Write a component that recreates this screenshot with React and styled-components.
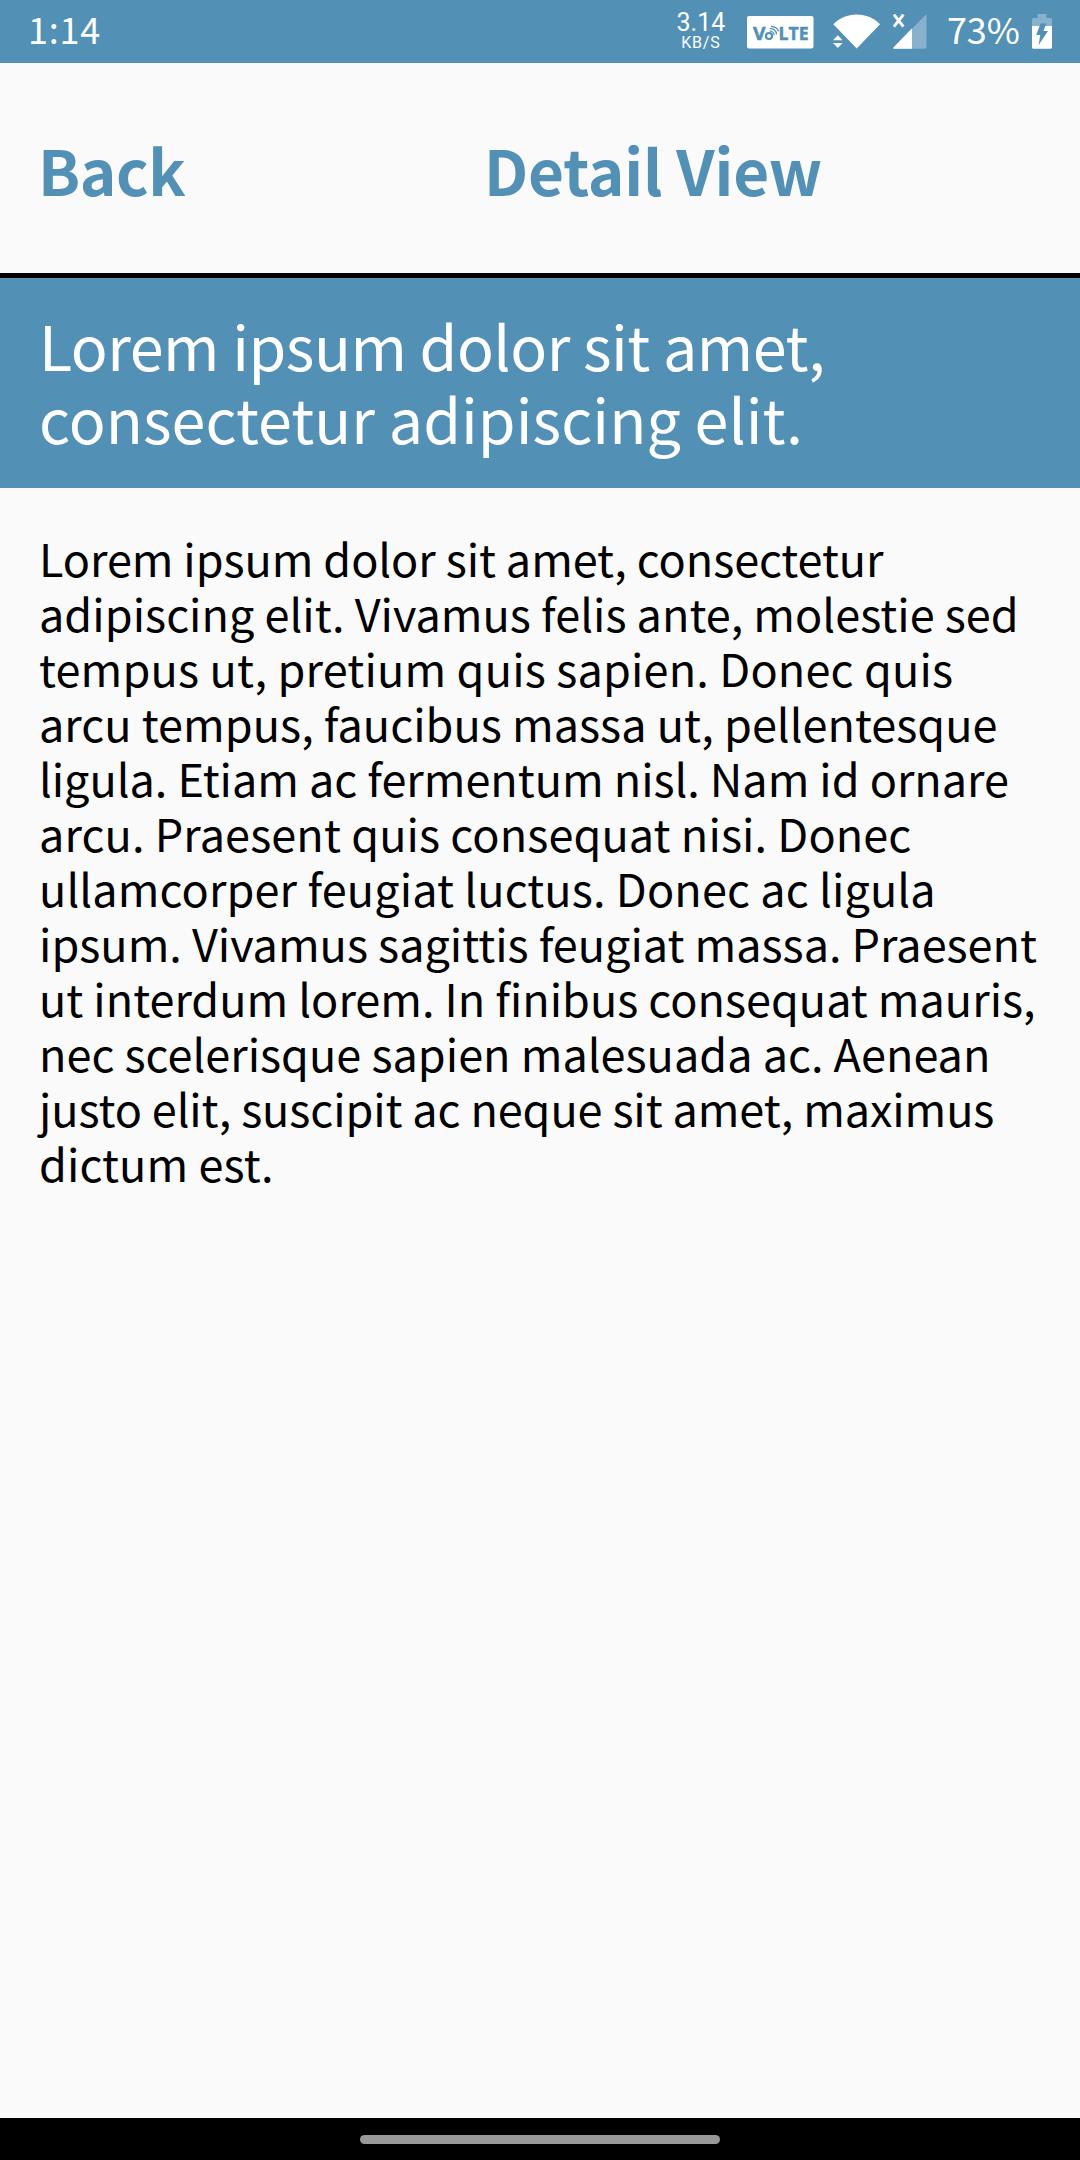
import React from 'react';
import styled, { createGlobalStyle } from 'styled-components';

const BLUE = '#5390b6';
const FONT = '"Noto Sans CJK SC", "Noto Sans", sans-serif';

const GlobalStyle = createGlobalStyle`
  body {
    margin: 0;
    background: #fafafa;
    font-family: ${FONT};
  }
`;

const Screen = styled.div`
  display: flex;
  flex-direction: column;
  width: 1080px;
  height: 2160px;
  overflow: hidden;
  background: #fafafa;
`;

const StatusBar = styled.div`
  display: flex;
  align-items: flex-start;
  height: 63px;
  flex: none;
  box-sizing: border-box;
  padding: 0 28px 0 28px;
  background: ${BLUE};
  color: #fff;
`;

const StatusText = styled.span`
  font-size: 36px;
  line-height: 56px;
  letter-spacing: ${(p) => p.$tracking}px;
  white-space: nowrap;
`;

const Spacer = styled.div`
  flex: 1;
`;

const Speed = styled.div`
  display: flex;
  flex-direction: column;
  align-items: center;
  width: 48px;
  margin: 10px 22px 0 0;
  font-family: Roboto, sans-serif;
  white-space: nowrap;
`;

const SpeedValue = styled.span`
  font-size: 25px;
  line-height: 25px;
`;

const SpeedUnit = styled.span`
  font-size: 16px;
  line-height: 16px;
  letter-spacing: 0.8px;
`;

const Icon = styled.svg`
  display: block;
  flex: none;
  width: ${(p) => p.$w}px;
  height: 36px;
  margin: 14px ${(p) => p.$gap}px 0 0;
`;

const BatteryGroup = styled.div`
  display: flex;
  gap: 12px;
`;

const NavBar = styled.header`
  display: flex;
  align-items: center;
  height: 215px;
  flex: none;
  box-sizing: border-box;
  padding: 2px 38px 0;
  border-bottom: 5px solid #000;
  color: ${BLUE};
`;

const BackButton = styled.button`
  width: 446px;
  padding: 0;
  border: 0;
  background: none;
  color: inherit;
  font: 700 62px/73px ${FONT};
  letter-spacing: -0.4px;
  text-align: left;
`;

const NavTitle = styled.h1`
  margin: 0;
  font: 700 62px/73px ${FONT};
  letter-spacing: -0.15px;
`;

const Banner = styled.section`
  height: 210px;
  flex: none;
  box-sizing: border-box;
  padding: 30px 39px 0;
  background: ${BLUE};
  color: #fff;
`;

const Line = styled.span`
  display: block;
  white-space: pre;
  letter-spacing: ${(p) => p.$tracking}px;
`;

const Heading = styled.h2`
  margin: 0;
  font-weight: 400;
  font-size: 61px;
  line-height: 73px;
`;

const Article = styled.main`
  flex: 1;
  padding: 42px 40px 0 39px;
  color: #000;
`;

const Paragraph = styled.p`
  margin: 0;
  font-size: 45px;
  line-height: 55px;
`;

const GestureBar = styled.footer`
  display: flex;
  justify-content: center;
  height: 42px;
  flex: none;
  box-sizing: border-box;
  padding-top: 17px;
  background: #000;
`;

const Handle = styled.div`
  width: 360px;
  height: 9px;
  border-radius: 5px;
  background: #989898;
`;

const heading = [
  ['Lorem ipsum dolor sit amet,', -0.5],
  ['consectetur adipiscing elit.', 0.05],
];

const body = [
  ['Lorem ipsum dolor sit amet, consectetur', -0.07],
  ['adipiscing elit. Vivamus felis ante, molestie sed', 0.03],
  ['tempus ut, pretium quis sapien. Donec quis', 0.18],
  ['arcu tempus, faucibus massa ut, pellentesque', 0.03],
  ['ligula. Etiam ac fermentum nisl. Nam id ornare', -0.02],
  ['arcu. Praesent quis consequat nisi. Donec', 0.1],
  ['ullamcorper feugiat luctus. Donec ac ligula', 0.13],
  ['ipsum. Vivamus sagittis feugiat massa. Praesent', 0],
  ['ut interdum lorem. In finibus consequat mauris,', 0],
  ['nec scelerisque sapien malesuada ac. Aenean', 0.02],
  ['justo elit, suscipit ac neque sit amet, maximus', -0.1],
  ['dictum est.', 0.1],
];

const Lines = ({ lines }) =>
  lines.map(([text, tracking]) => (
    <Line key={text} $tracking={tracking}>
      {text + ' '}
    </Line>
  ));

const VolteIcon = () => (
  <Icon $w={67} $gap={19} viewBox="0 0 67 36">
    <rect x="0" y="2" width="66.5" height="32.5" rx="2" fill="#fff" />
    <g fill={BLUE} fontFamily="Open Sans, sans-serif" fontWeight="700" stroke={BLUE} strokeWidth=".5">
      <text x="6" y="25.6" fontSize="18" textLength="12.5" lengthAdjust="spacingAndGlyphs">V</text>
      <text x="31.5" y="25.6" fontSize="18" textLength="30" lengthAdjust="spacingAndGlyphs">LTE</text>
    </g>
    <g fill="none" stroke={BLUE}>
      <circle cx="22" cy="22" r="3" strokeWidth="2.2" />
      <path d="M22.5 16.8q4 .3 4.7 4.4M22.8 14.4q6 .2 6.8 6M24 12.3q6.5 .6 7.5 5" strokeWidth="1.3" />
    </g>
  </Icon>
);

const WifiIcon = () => (
  <Icon $w={48} $gap={12} viewBox="0 0 48 36">
    <path d="M.3 10.3C6.5 4 14.5 .5 23.7 .5S41 4 47 10.3L23.7 34.5Z" fill="#fff" />
    <path d="M5 19.5l6.5 6v9H-1v-9Z" fill={BLUE} />
    <path d="M4.8 21.2l4.8 5H0ZM0 29h9.6l-4.8 5Z" fill="#fff" />
  </Icon>
);

const SignalIcon = () => (
  <Icon $w={34} $gap={20} viewBox="0 0 34 36">
    <path d="M33.5 0V33q0 1.8-1.8 1.8H1q-1.5 0-.5-1.2Z" fill="#fff" fillOpacity=".3" />
    <path d="M19 14.3V34.8H1q-1.5 0-.5-1.2Z" fill="#fff" />
    <path d="M.9 .5L10.4 12.6M10.4 .5L.9 12.6" stroke="#fff" strokeWidth="2.9" />
  </Icon>
);

const BatteryIcon = () => (
  <Icon $w={20} $gap={0} viewBox="0 0 20 36">
    <path d="M5.5 0h9v4H18.5q1.5 0 1.5 1.5V12H0V5.5Q0 4 1.5 4h4Z" fill="#fff" fillOpacity=".3" />
    <path d="M0 12H20V33.3q0 1.5-1.5 1.5h-17Q0 34.8 0 33.3Z" fill="#fff" />
    <path d="M8.5 9.5H14.3L11.5 17H16L6.5 31.3L8.3 21H4.2Z" fill={BLUE} />
  </Icon>
);

export default function App() {
  return (
    <Screen>
      <GlobalStyle />
      <StatusBar>
        <StatusText $tracking={0.8}>1:14</StatusText>
        <Spacer />
        <Speed>
          <SpeedValue>3.14</SpeedValue>
          <SpeedUnit>KB/S</SpeedUnit>
        </Speed>
        <VolteIcon />
        <WifiIcon />
        <SignalIcon />
        <BatteryGroup>
          <StatusText $tracking={0}>73%</StatusText>
          <BatteryIcon />
        </BatteryGroup>
      </StatusBar>
      <NavBar>
        <BackButton>Back</BackButton>
        <NavTitle>Detail View</NavTitle>
      </NavBar>
      <Banner>
        <Heading>
          <Lines lines={heading} />
        </Heading>
      </Banner>
      <Article>
        <Paragraph>
          <Lines lines={body} />
        </Paragraph>
      </Article>
      <GestureBar>
        <Handle />
      </GestureBar>
    </Screen>
  );
}
